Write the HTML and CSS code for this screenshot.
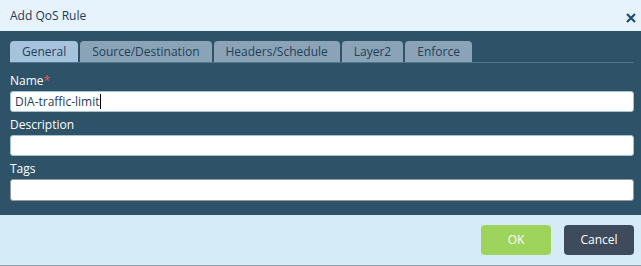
FILE: index.html
```html
<!DOCTYPE html>
<html lang="en">

<head>
  <meta charset="UTF-8">
  <meta name="viewport" content="width=device-width, initial-scale=1.0">
  <title>Add QoS Rule</title>
  <link rel="stylesheet" href="styles.css">
</head>

<body>
  <div class="dialog">
    <div class="header">
      <span class="title">Add QoS Rule</span>
      <span class="close">
        <svg width="10" height="10" viewBox="0 0 10 10"><path d="M1 1L9 9M9 1L1 9" stroke="#1d4d6e" stroke-width="2.2" /></svg>
      </span>
    </div>
    <div class="body">
      <div class="tabs">
        <span class="tab active">General</span>
        <span class="tab">Source/Destination</span>
        <span class="tab">Headers/Schedule</span>
        <span class="tab">Layer2</span>
        <span class="tab">Enforce</span>
      </div>
      <div class="field">
        <label>Name<span class="req">*</span></label>
        <div class="input">DIA-traffic-limit<span class="caret"></span></div>
      </div>
      <div class="field">
        <label>Description</label>
        <div class="input"></div>
      </div>
      <div class="field">
        <label>Tags</label>
        <div class="input tall"></div>
      </div>
    </div>
    <div class="footer">
      <span class="btn ok">OK</span>
      <span class="btn cancel">Cancel</span>
    </div>
  </div>
</body>

</html>
```

FILE: styles.css
```css
body {
  margin: 0;
  font-family: "Open Sans", "Liberation Sans", sans-serif;
  font-size: 12px;
}
.dialog {
  width: 641px;
  height: 265px;
  border-bottom: 1px solid #9aa3a8;
  display: flex;
  flex-direction: column;
}
.header {
  height: 31px;
  background: #e6f3fc;
  display: flex;
  align-items: center;
  justify-content: space-between;
  padding: 0 5px 0 10px;
}
.title {
  color: #1e3a55;
  font-size: 12px;
  margin-top: -1px;
}
.close {
  display: flex;
  margin-top: 4px;
}
.body {
  background: #2e5369;
  padding: 10px 7px 14px 10px;
}
.tabs {
  display: flex;
  gap: 2px;
  border-bottom: 1px solid #4d7690;
  height: 21px;
  margin-bottom: 10px;
}
.tab {
  background: #8aa3b6;
  color: #23405a;
  padding: 0 12px;
  height: 21px;
  line-height: 21px;
  border-radius: 4px 4px 0 0;
  font-size: 12px;
}
.tab.active {
  background: #a5c3dc;
}
.field label {
  display: block;
  color: #ffffff;
  font-size: 12px;
  line-height: 16px;
}
.req {
  color: #e0556a;
}
.field {
  margin-bottom: 5px;
}
.field:last-child {
  margin-bottom: 0;
}
.input {
  background: #fff;
  height: 19px;
  border: 1px solid #a6c3d3;
  border-radius: 3px;
  margin-top: 2px;
  color: #23405a;
  line-height: 19px;
  padding-left: 4px;
}
.input.tall {
  height: 20px;
  border-color: #9a9a9a;
}
.caret {
  display: inline-block;
  width: 1px;
  height: 15px;
  background: #000;
  vertical-align: -3px;
}
.footer {
  flex: 1;
  background: #d6ebf8;
  display: flex;
  justify-content: flex-end;
  align-items: flex-start;
  gap: 13px;
  padding: 10px 7px 0 0;
}
.btn {
  width: 70px;
  height: 30px;
  line-height: 30px;
  text-align: center;
  border-radius: 4px;
  font-size: 12px;
  color: #fff;
}
.ok {
  background: #9ed35c;
}
.cancel {
  background: #3d4b5c;
}
```
